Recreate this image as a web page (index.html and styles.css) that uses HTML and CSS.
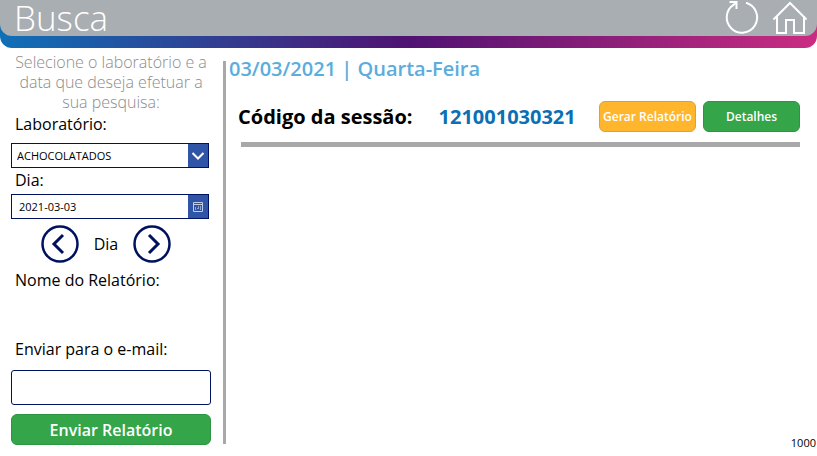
FILE: index.html
```html
<!DOCTYPE html>
<html lang="pt-BR">
<head>
  <meta charset="utf-8">
  <meta name="viewport" content="width=device-width, initial-scale=1">
  <title>Busca</title>
  <link rel="stylesheet" href="styles.css">
</head>
<body>
  <header class="topbar">
    <div class="topbar-inner">
      <h1 class="title">Busca</h1>
      <nav class="actions">
        <button class="icon-button" type="button" aria-label="Atualizar">
          <svg width="36" height="36" viewBox="0 0 36 36" fill="none" stroke="#fff" stroke-width="2">
            <path d="M22 2.800A15.200 15.200 0 1 1 9.800 4.600L12.500 2.500"/>
            <path d="M5.500 2H12.500V9"/>
          </svg>
        </button>
        <a class="icon-button" href="#" aria-label="Início">
          <svg width="36" height="36" viewBox="0 0 36 36" fill="none" stroke="#fff" stroke-width="2">
            <path d="M1.500 19.500L18 3L34.500 19.500"/>
            <path d="M5 16.500V33H14V20H22V33H32V16.500"/>
          </svg>
        </a>
      </nav>
    </div>
  </header>
  <main class="layout">
    <form class="sidebar">
      <p class="hint">Selecione o laboratório e a data que deseja efetuar a sua pesquisa:</p>
      <label class="label" for="lab">Laboratório:</label>
      <div class="field">
        <select class="field-input" id="lab"><option>ACHOCOLATADOS</option></select>
        <span class="field-icon">
          <svg width="14" height="10" viewBox="0 0 14 10" fill="none" stroke="#fff" stroke-width="2"><path d="M1.500 2L7 7.500L12.500 2"/></svg>
        </span>
      </div>
      <label class="label" for="day">Dia:</label>
      <div class="field">
        <input class="field-input" id="day" type="text" value="2021-03-03">
        <button class="field-icon" type="button" aria-label="Abrir calendário">
          <svg width="12" height="12" viewBox="0 0 12 12" fill="none" stroke="#c3cde6"><path d="M1.500 1.500H10.500V10.500H1.500ZM1 3.500H11"/><path d="M3.500 6V9M6.500 5V8M8.500 5V9M5 7.500H7" stroke="#8fa2d2"/></svg>
        </button>
      </div>
      <div class="stepper">
        <button class="icon-button" type="button" aria-label="Dia anterior">
          <svg width="38" height="38" viewBox="0 0 38 38" fill="none" stroke="#00125f"><circle cx="19" cy="19" r="17.500" stroke-width="2.500"/><path d="M22 10L13 19L22 28" stroke-width="3"/></svg>
        </button>
        <span>Dia</span>
        <button class="icon-button" type="button" aria-label="Próximo dia">
          <svg width="38" height="38" viewBox="0 0 38 38" fill="none" stroke="#00125f"><circle cx="19" cy="19" r="17.500" stroke-width="2.500"/><path d="M16 10L25 19L16 28" stroke-width="3"/></svg>
        </button>
      </div>
      <p class="label report-name">Nome do Relatório:</p>
      <label class="label" for="email">Enviar para o e-mail:</label>
      <input class="email" id="email" type="email">
      <button class="button button-large" type="button">Enviar Relatório</button>
    </form>
    <section class="results">
      <h2 class="date">03/03/2021 | Quarta-Feira</h2>
      <article class="session">
        <span class="session-label">Código da sessão:</span>
        <span class="session-code">121001030321</span>
        <div class="session-actions">
          <button class="button button-amber" type="button">Gerar Relatório</button>
          <button class="button" type="button">Detalhes</button>
        </div>
      </article>
      <p class="count">1000</p>
    </section>
  </main>
</body>
</html>
```
FILE: styles.css
```css
* {
  box-sizing: border-box;
}

body {
  margin: 0;
  min-height: 100vh;
  display: flex;
  flex-direction: column;
  background: #fff;
  color: #000;
  font-family: "Open Sans", "Noto Sans", sans-serif;
  font-size: 16px;
}

h1, h2, p {
  margin: 0;
}

button, input, select {
  font-family: inherit;
}

.topbar {
  padding-bottom: 12px;
  border-radius: 0 0 12px 12px;
  background: linear-gradient(90deg, #0f70b7, #4f1271 50%, #cb2c82);
}

.topbar-inner {
  display: flex;
  justify-content: space-between;
  height: 36px;
  padding: 0 9px 0 14px;
  border-radius: 0 0 12px 12px;
  background: #a9aeb2;
}

.title {
  color: #fff;
  font-size: 35px;
  font-weight: 300;
  line-height: 36px;
}

.actions {
  display: flex;
  gap: 12px;
}

.icon-button {
  display: block;
  padding: 0;
  border: 0;
  background: none;
}

.icon-button svg {
  display: block;
}

.layout {
  flex: 1;
  display: flex;
  padding-top: 4px;
}

.sidebar {
  flex: none;
  display: flex;
  flex-direction: column;
  width: 223px;
  padding: 0 12px 8px 11px;
}

.hint {
  color: #8c8c8c;
  font-weight: 300;
  line-height: 20px;
  text-align: center;
}

.label {
  padding-left: 4px;
  line-height: 25px;
}

.hint + .label {
  margin-bottom: 6px;
}

.field {
  display: flex;
  height: 25px;
  margin-right: 2px;
  border: 1px solid #00125f;
}

.field + .label {
  margin-bottom: 1px;
}

.field-input {
  flex: 1;
  min-width: 0;
  padding: 0 7px;
  border: 0;
  border-radius: 0;
  background: #fff;
  color: #000;
  font-size: 11px;
  appearance: none;
}

select.field-input {
  padding: 0 5px;
}

.field-icon {
  display: grid;
  place-items: center;
  width: 20px;
  padding: 0;
  border: 0;
  background: #3155a6;
}

.stepper {
  display: flex;
  justify-content: center;
  align-items: center;
  gap: 15px;
  margin: 6px 10px 5px 0;
}

.report-name {
  margin-bottom: 44px;
}

.email {
  width: 100%;
  height: 35px;
  margin: 8px 0 9px;
  padding: 0 8px;
  border: 1px solid #00125f;
  border-radius: 3px;
  font-size: 16px;
}

.button {
  height: 31px;
  padding: 0;
  border: 1px solid #2c9442;
  border-radius: 6px;
  background: #34a548;
  color: #fff;
  font-size: 12px;
  font-weight: 600;
}

.button-large {
  font-size: 16px;
}

.button-amber {
  border-color: #dca035;
  background: #ffb62d;
}

.results {
  flex: 1;
  display: flex;
  flex-direction: column;
  position: relative;
  margin: 9px 0 12px;
  padding: 0 17px 0 3px;
  border-left: 3px solid #a8a8a8;
}

.date {
  color: #5aaddc;
  font-size: 20px;
  font-weight: 600;
  line-height: 16px;
}

.session {
  display: flex;
  align-items: center;
  margin: 16px 0 0 12px;
  padding: 8px 0 10px;
  border-bottom: 5px solid #a8a8a8;
  font-size: 20px;
  font-weight: 700;
}

.session-label {
  margin-left: -3px;
}

.session-code {
  margin-left: 26px;
  color: #0b6fb5;
}

.session-actions {
  display: grid;
  grid-template-columns: 97px 97px;
  gap: 7px;
  margin-left: auto;
}

.count {
  position: absolute;
  right: 1px;
  bottom: -6px;
  font-size: 11px;
  line-height: 14px;
}
```
